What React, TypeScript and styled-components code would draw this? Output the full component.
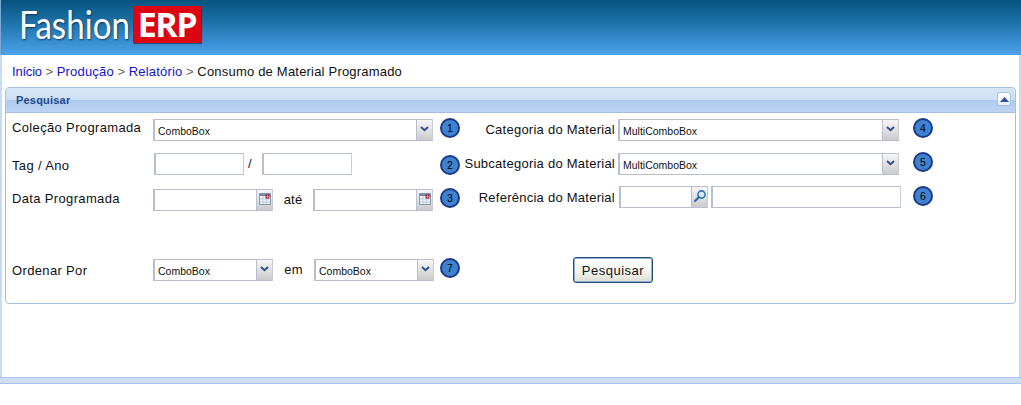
import React from "react";
import styled, { createGlobalStyle } from "styled-components";

const Global = createGlobalStyle`
  html, body { margin: 0; padding: 0; background: #fff; }
  body { font-family: "Liberation Sans", Arial, sans-serif; font-size: 13px; color: #111; overflow: hidden; }
`;

const Page = styled.div`
  width: 1021px;
  height: 405px;
  display: flex;
  flex-direction: column;
  overflow: hidden;
`;
const Header = styled.header`
  height: 55px;
  flex: none;
  display: flex;
  align-items: flex-start;
  padding: 6px 0 0 18px;
  box-sizing: border-box;
  background: linear-gradient(#06537f 0%, #1d71a8 40%, #4da2ea 100%);
  border-left: 1px solid #7fa9cc;
`;
const LogoWord = styled.span`
  width: 114px;
  flex: none;
  font-family: "Lato", sans-serif;
  font-size: 39px;
  line-height: 37px;
  height: 37px;
  color: #fff;
  text-shadow: 1px 1px 2px rgba(0, 30, 60, 0.7);
  transform: scaleX(0.85);
  transform-origin: left center;
  white-space: nowrap;
`;
const LogoBox = styled.span`
  width: 68px;
  height: 37px;
  flex: none;
  background: #dd0512;
  color: #fff;
  font-family: "Open Sans", sans-serif;
  font-weight: 700;
  font-size: 34px;
  line-height: 37px;
  text-align: center;
  letter-spacing: -1.4px;
  box-shadow: 1px 1px 1px rgba(0, 30, 60, 0.5);
`;
const Main = styled.main`
  height: 322px;
  flex: none;
  box-sizing: border-box;
  border-left: 2px solid #c6dcf6;
  border-right: 2px solid #c6dcf6;
  padding: 0 3px;
`;
const Crumbs = styled.nav`
  height: 32px;
  padding-left: 7px;
  display: flex;
  align-items: center;
  gap: 3.5px;
  font-size: 13px;
  letter-spacing: 0.2px;
`;
const Crumb = styled.a<{ $tight?: boolean }>`
  color: #1212d0;
  letter-spacing: ${(p) => (p.$tight ? "-0.2px" : "inherit")};
`;
const Sep = styled.span`
  color: #666;
`;
const Panel = styled.section`
  height: 217px;
  box-sizing: border-box;
  border: 1px solid #a3bfe4;
  border-radius: 4px;
  overflow: hidden;
`;
const PanelHead = styled.div`
  height: 25px;
  box-sizing: border-box;
  padding: 0 4px 0 10px;
  display: flex;
  align-items: center;
  justify-content: space-between;
  background: linear-gradient(#d7e5f6 0%, #cfe0f4 48%, #aecaee 52%, #bcd3f1 100%);
  border-bottom: 1px solid #a3bfe4;
  font-size: 11px;
  font-weight: 700;
  letter-spacing: 0.2px;
  color: #1f4a92;
`;
const Collapse = styled.button`
  width: 14px;
  height: 14px;
  margin-top: -2px;
  padding: 0;
  display: flex;
  align-items: center;
  justify-content: center;
  background: linear-gradient(#fff, #e8effa);
  border: 1px solid #a3bfe4;
  border-radius: 3px;
`;
const Form = styled.div`
  display: grid;
  grid-template-columns: 141px 287px 21px 157px 295px 40px;
  grid-template-rows: 34px 36px 70px 30px;
  padding: 6px 0 0 6px;
`;
const Label = styled.label<{ $right?: boolean; $dy?: number }>`
  font-size: 13px;
  line-height: 18px;
  text-align: ${(p) => (p.$right ? "right" : "left")};
  padding-right: ${(p) => (p.$right ? "3px" : "0")};
  letter-spacing: ${(p) => (p.$right ? "0.25px" : "0.35px")};
  white-space: nowrap;
  margin-top: ${(p) => p.$dy ?? 0}px;
`;
const Pair = styled.div<{ $dy?: number }>`
  display: flex;
  align-items: flex-start;
  margin-top: ${(p) => p.$dy ?? 0}px;
`;
const Between = styled.span<{ $w: number }>`
  width: ${(p) => p.$w}px;
  text-align: center;
  line-height: 20px;
  flex: none;
  letter-spacing: 0.2px;
  margin-top: 1px;
`;
const Slash = styled(Between)`
  box-sizing: border-box;
  padding-right: 6px;
`;
const Field = styled.div<{ $w: number; $ml?: number }>`
  width: ${(p) => p.$w}px;
  margin-left: ${(p) => p.$ml ?? 0}px;
  height: 22px;
  box-sizing: border-box;
  flex: none;
  display: flex;
  background: #fff;
  border: 1px solid #b8bdd0;
  border-left-width: 2px;
  border-right-color: #c8ccd9;
  font-size: 10.5px;
  line-height: 22px;
  color: #111;
`;
const FieldText = styled.span`
  flex: 1;
  padding-left: 3px;
  min-width: 0;
`;
const Trigger = styled.span`
  width: 16px;
  flex: none;
  display: flex;
  align-items: center;
  justify-content: center;
  padding-bottom: 2px;
  box-sizing: border-box;
  background: linear-gradient(#f6f6f6, #cbcbcb);
  border-left: 1px solid #b8bdd0;
`;
const Badge = styled.span<{ $dy?: number }>`
  width: 20px;
  height: 20px;
  margin-top: ${(p) => p.$dy ?? 0}px;
  box-sizing: border-box;
  border-radius: 50%;
  background: #3f82cf;
  border: 2px solid #1c3a87;
  font-size: 10.5px;
  line-height: 16px;
  text-align: center;
  color: #000;
`;
const SearchButton = styled.button`
  width: 80px;
  height: 26px;
  margin: -2px 0 0 112px;
  padding: 0;
  border: 1px solid #1f4f7e;
  border-radius: 3px;
  box-shadow: inset 0 0 0 1px #8fb0cf;
  background: linear-gradient(#fff, #f3f3ee 60%, #dcdcd2);
  font-family: "Liberation Sans", Arial, sans-serif;
  font-size: 13px;
  letter-spacing: 0.5px;
  color: #111;
`;
const Splitter = styled.div`
  height: 7px;
  flex: none;
  box-sizing: border-box;
  background: #cfe0f6;
  border-top: 1px solid #a9c4e8;
  border-bottom: 1px solid #a9c4e8;
`;
const Footer = styled.footer`
  flex: 1;
  background: #fff;
`;

const Chevron = () => (
  <svg width="9" height="6" viewBox="0 0 9 6">
    <path d="M1 1 L4.5 4.2 L8 1" fill="none" stroke="#2f4f8f" strokeWidth="2" />
  </svg>
);
const Cal = () => (
  <svg width="12" height="12" viewBox="0 0 12 12">
    <rect x="0.5" y="0.5" width="11" height="11" fill="#eef1f6" stroke="#8c97ac" />
    <rect x="1" y="1" width="10" height="2" fill="#6f86a8" />
    <path d="M1 6h10M1 9h10M4 3v8M7 3v8" stroke="#c3cad6" strokeWidth="1" />
    <circle cx="8.5" cy="3.5" r="1.6" fill="#fff" stroke="#a01020" strokeWidth="1.2" />
  </svg>
);
const Lens = () => (
  <svg width="14" height="14" viewBox="0 0 14 14">
    <circle cx="8.5" cy="5.5" r="3.6" fill="#dcebf8" stroke="#2f75b5" strokeWidth="1.6" />
    <path d="M5.8 8.2 L2 12" stroke="#2f6aa8" strokeWidth="2.2" strokeLinecap="round" />
  </svg>
);

const Combo = ({ w, text }: { w: number; text: string }) => (
  <Field $w={w}>
    <FieldText>{text}</FieldText>
    <Trigger><Chevron /></Trigger>
  </Field>
);
const DateBox = () => (
  <Field $w={120}>
    <FieldText />
    <Trigger><Cal /></Trigger>
  </Field>
);

export default function App() {
  return (
    <Page>
      <Global />
      <Header>
        <LogoWord>Fashion</LogoWord>
        <LogoBox>ERP</LogoBox>
      </Header>
      <Main>
        <Crumbs>
          <Crumb $tight>Início</Crumb><Sep>&gt;</Sep>
          <Crumb>Produção</Crumb><Sep>&gt;</Sep>
          <Crumb>Relatório</Crumb><Sep>&gt;</Sep>
          <span>Consumo de Material Programado</span>
        </Crumbs>
        <Panel>
          <PanelHead>
            Pesquisar
            <Collapse aria-label="Recolher">
              <svg width="9" height="5" viewBox="0 0 9 5"><path d="M4.5 0 L9 5 H0 Z" fill="#2f4f9f" /></svg>
            </Collapse>
          </PanelHead>
          <Form>
            <Label>Coleção Programada</Label>
            <Combo w={280} text="ComboBox" />
            <Badge $dy={-1}>1</Badge>
            <Label $right $dy={2}>Categoria do Material</Label>
            <Combo w={281} text="MultiComboBox" />
            <Badge $dy={-1}>4</Badge>

            <Label $dy={4}>Tag / Ano</Label>
            <Pair>
              <Field $w={90} $ml={1} />
              <Slash $w={18}>/</Slash>
              <Field $w={90} />
            </Pair>
            <Badge $dy={2}>2</Badge>
            <Label $right $dy={2}>Subcategoria do Material</Label>
            <Combo w={281} text="MultiComboBox" />
            <Badge $dy={-1}>5</Badge>

            <Label $dy={1}>Data Programada</Label>
            <Pair>
              <DateBox />
              <Between $w={40}>até</Between>
              <DateBox />
            </Pair>
            <Badge $dy={-1}>3</Badge>
            <Label $right>Referência do Material</Label>
            <Pair $dy={-3}>
              <Field $w={89} $ml={1}>
                <FieldText />
                <Trigger><Lens /></Trigger>
              </Field>
              <Field $w={190} $ml={3} />
            </Pair>
            <Badge $dy={-3}>6</Badge>

            <Label $dy={3}>Ordenar Por</Label>
            <Pair>
              <Combo w={120} text="ComboBox" />
              <Between $w={41}>em</Between>
              <Combo w={120} text="ComboBox" />
            </Pair>
            <Badge $dy={-1}>7</Badge>
            <SearchButton>Pesquisar</SearchButton>
          </Form>
        </Panel>
      </Main>
      <Splitter />
      <Footer />
    </Page>
  );
}
